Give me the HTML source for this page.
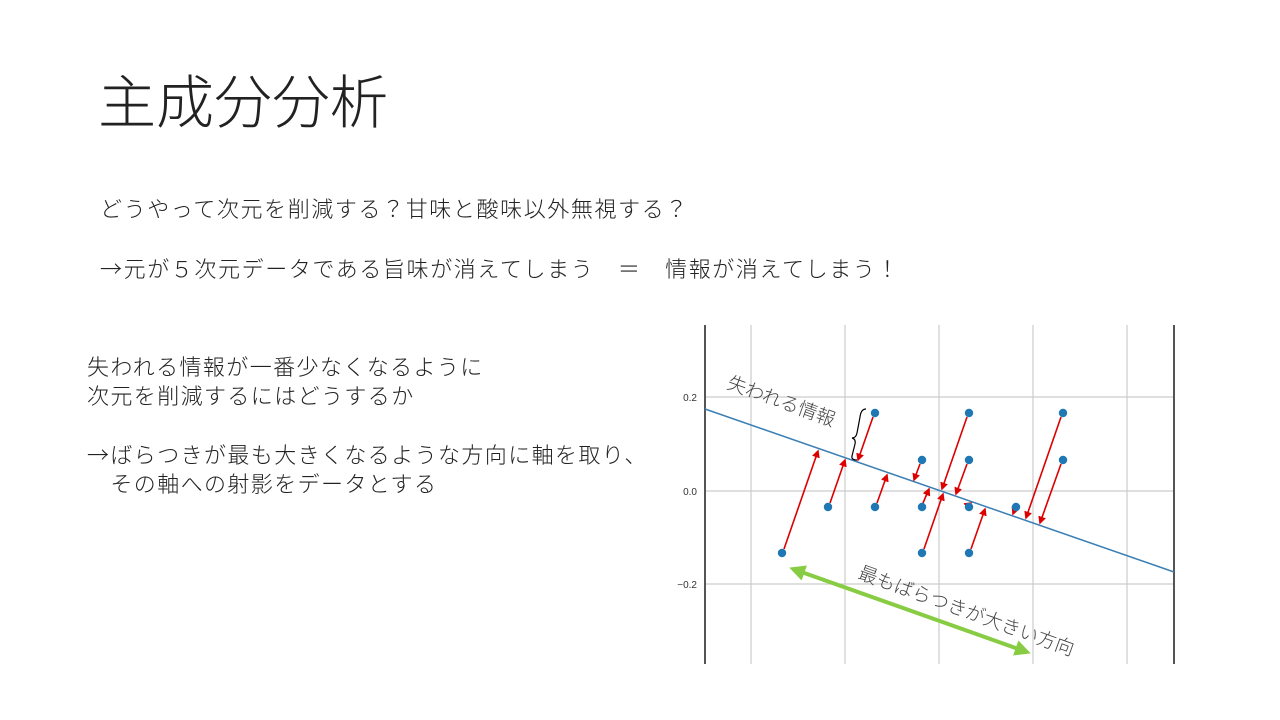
<!DOCTYPE html>
<html><head><meta charset="utf-8"><style>
body{margin:0;width:1280px;height:720px;background:#fff;position:relative;overflow:hidden;font-family:"Liberation Sans","Noto Sans CJK JP",sans-serif;color:#222}
.t{position:absolute;white-space:nowrap;font-weight:300}
.ar{font-family:"Noto Sans CJK JP",sans-serif}
</style></head><body>
<div class="t" style="left:98px;top:64px;font-size:58px;letter-spacing:0px;line-height:80px;font-weight:200">主成分分析</div>
<div class="t" style="left:100px;top:195px;font-size:22px;letter-spacing:1.6px;line-height:30px">どうやって次元を削減する？甘味と酸味以外無視する？</div>
<div class="t" style="left:100px;top:253px;font-size:22px;letter-spacing:1.6px;line-height:30px"><span class="ar">→</span>元が５次元データである旨味が消えてしまう　＝　情報が消えてしまう！</div>
<div class="t" style="left:87px;top:353px;font-size:22px;letter-spacing:1.4px;line-height:29px">失われる情報が一番少なくなるように<br>次元を削減するにはどうするか<br><br><span class="ar">→</span>ばらつきが最も大きくなるような方向に軸を取り、<br>　その軸への射影をデータとする</div>
<svg width="1280" height="720" style="position:absolute;left:0;top:0">
<defs>
<marker id="a" markerWidth="5" markerHeight="5" refX="4" refY="2.5" orient="auto"><path d="M0,0L5,2.5L0,5z" fill="#d00"/></marker>
<marker id="g" markerWidth="4" markerHeight="4" refX="3" refY="2" orient="auto-start-reverse"><path d="M0,0L4,2L0,4z" fill="#8c4"/></marker>
</defs>
<g stroke="#ccc" stroke-width="1.2">
<line x1="751" y1="325" x2="751" y2="664"/><line x1="845" y1="325" x2="845" y2="664"/><line x1="939" y1="325" x2="939" y2="664"/><line x1="1033" y1="325" x2="1033" y2="664"/><line x1="1127" y1="325" x2="1127" y2="664"/>
<line x1="705" y1="397" x2="1174" y2="397"/><line x1="705" y1="491" x2="1174" y2="491"/><line x1="705" y1="584" x2="1174" y2="584"/>
</g>
<line x1="705" y1="325" x2="705" y2="664" stroke="#555" stroke-width="2"/>
<line x1="1174" y1="325" x2="1174" y2="664" stroke="#555" stroke-width="2"/>
<g font-family="Liberation Sans" font-size="10" fill="#333" text-anchor="end"><text x="697" y="401">0.2</text><text x="697" y="495">0.0</text><text x="697" y="588">−0.2</text></g>
<line x1="705" y1="409" x2="1174" y2="572" stroke="#3a7fb5" stroke-width="1.5"/>
<g stroke="#d00" stroke-width="1.6" marker-end="url(#a)">
<line x1="784" y1="549" x2="818" y2="451"/><line x1="830" y1="503" x2="845" y2="460"/><line x1="877" y1="503" x2="887" y2="475"/><line x1="923" y1="503" x2="929" y2="489"/><line x1="968" y1="505" x2="971" y2="503"/><line x1="1015" y1="509" x2="1013" y2="514"/>
<line x1="873" y1="417" x2="858" y2="460"/><line x1="967" y1="417" x2="942" y2="489"/><line x1="1061" y1="417" x2="1026" y2="518"/><line x1="920" y1="464" x2="914" y2="480"/><line x1="967" y1="464" x2="956" y2="494"/><line x1="1061" y1="464" x2="1040" y2="523"/><line x1="924" y1="549" x2="943" y2="494"/><line x1="971" y1="549" x2="985" y2="509"/>
</g>
<g fill="#1f77b4">
<circle cx="782" cy="553" r="4.2"/><circle cx="828" cy="507" r="4.2"/><circle cx="875" cy="507" r="4.2"/><circle cx="922" cy="507" r="4.2"/><circle cx="969" cy="507" r="4.2"/><circle cx="1016" cy="507" r="4.2"/><circle cx="875" cy="413" r="4.2"/><circle cx="969" cy="413" r="4.2"/><circle cx="1063" cy="413" r="4.2"/><circle cx="922" cy="460" r="4.2"/><circle cx="969" cy="460" r="4.2"/><circle cx="1063" cy="460" r="4.2"/><circle cx="922" cy="553" r="4.2"/><circle cx="969" cy="553" r="4.2"/>
</g>
<path d="M866,409 q-5,0 -6,8 l-3,16 q-1,5 -5,5 q4,1 3,6 l-3,12 q-1,4 5,4" fill="none" stroke="#000" stroke-width="1.2"/>
<line x1="793" y1="569" x2="1027" y2="652" stroke="#8c4" stroke-width="4" marker-start="url(#g)" marker-end="url(#g)"/>
<text x="726" y="388" font-size="19" fill="#444" font-weight="300" transform="rotate(20 726 388)" font-family="Liberation Sans,Noto Sans CJK JP,sans-serif">失われる情報</text>
<text x="857" y="578" font-size="19" fill="#444" font-weight="300" transform="rotate(20 857 578)" font-family="Liberation Sans,Noto Sans CJK JP,sans-serif">最もばらつきが大きい方向</text>
</svg>
</body></html>
